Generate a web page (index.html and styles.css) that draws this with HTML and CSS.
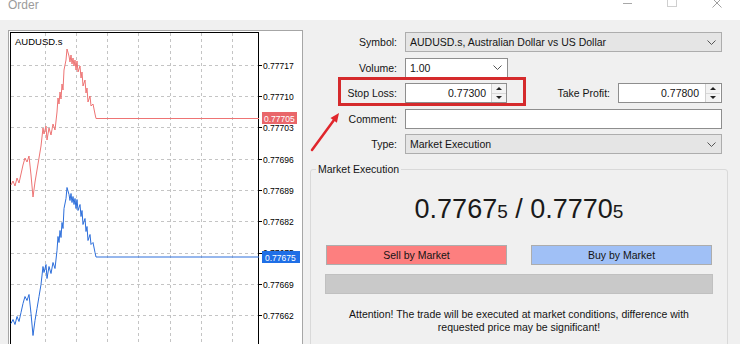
FILE: index.html
```html
<!DOCTYPE html>
<html lang="en">
<head>
<meta charset="utf-8">
<title>Order</title>
<link rel="stylesheet" href="styles.css">
</head>
<body>
<div class="window">
  <header class="titlebar">
    <span class="title">Order</span>
    <div class="controls">
      <svg class="ctl" width="45" height="10" viewBox="0 0 45 10"><path d="M18 3.5H27" stroke="#a8a8a8" fill="none"/></svg>
      <svg class="ctl" width="45" height="10" viewBox="0 0 45 10"><rect x="17.5" y="-2.5" width="9" height="9" stroke="#cfcfcf" fill="none"/></svg>
      <svg class="ctl" width="45" height="10" viewBox="0 0 45 10"><path d="M17.5 -1.5L26.5 7.5M26.5 -1.5L17.5 7.5" stroke="#a0a0a0" fill="none"/></svg>
    </div>
  </header>

  <main class="content">
    <div class="chart">
      <svg width="293" height="313" viewBox="9 31 293 313" class="chart-svg">
        <defs>
          <path id="price" fill="none" d="M11,185 L13,181 L15,186 L17,178 L19,183 L21,174 L23,165 L25,158 L27,162 L29,156 L31,175 L33,197 L35,182 L37,170 L39,158 L41,146 L43,128 L44,134 L46,126 L47,140 L49,128 L51,135 L53,124 L55,130 L57,112 L58,98 L59,104 L60,92 L61,99 L62,84 L63,90 L64,70 L66,60 L67,49 L69,56 L70,62 L71,55 L72,64 L73,58 L74,66 L75,60 L76,70 L77,61 L78,72 L80,66 L81,78 L82,72 L83,86 L85,80 L86,93 L87,88 L88,102 L90,96 L91,106 L93,104 L95,114 L96,118.5 L259,118.5"/>
        </defs>
        <path class="grid" d="M45.5 33V344M76.5 33V344M107.5 33V344M138.5 33V344M170.5 33V344M201.5 33V344M232.5 33V344M11 65.5H258M11 96.5H258M11 127.5H258M11 159.5H258M11 190.5H258M11 221.5H258M11 253.5H258M11 284.5H258M11 315.5H258"/>
        <rect x="10.5" y="32.5" width="248" height="330" fill="none" stroke="#000"/>
        <path class="ticks" d="M259 65.5H262M259 96.5H262M259 127.5H262M259 159.5H262M259 190.5H262M259 221.5H262M259 253.5H262M259 284.5H262M259 315.5H262M259 346.5H262"/>
        <text class="sym" x="15" y="45">AUDUSD.s</text>
        <g class="scale">
          <text x="263" y="68.5">0.77717</text>
          <text x="263" y="99.5">0.77710</text>
          <text x="263" y="130.5">0.77703</text>
          <text x="263" y="162.5">0.77696</text>
          <text x="263" y="193.5">0.77689</text>
          <text x="263" y="224.5">0.77682</text>
          <text x="263" y="255.5">0.77675</text>
          <text x="263" y="287.5">0.77669</text>
          <text x="263" y="318.5">0.77662</text>
          <text x="263" y="349.5">0.77655</text>
        </g>
        <use href="#price" stroke="#ee7474" stroke-width="1"/>
        <use href="#price" y="138.5" stroke="#2c6edb" stroke-width="1"/>
        <rect x="262" y="112" width="35" height="12" fill="#e9666a"/>
        <text class="tag" x="264" y="121.5">0.77705</text>
        <rect x="262" y="251" width="38" height="12" fill="#1f6fe6"/>
        <text class="tag" x="265" y="260.5">0.77675</text>
      </svg>
    </div>

    <section class="form">
      <div class="row">
        <span class="lbl">Symbol:</span>
        <div class="field grey wide">
          <span>AUDUSD.s, Australian Dollar vs US Dollar</span>
          <svg class="chev" width="9" height="5" viewBox="0 0 9 5"><polyline points="0.5,0.5 4.5,4.5 8.5,0.5" fill="none" stroke="#555"/></svg>
        </div>
      </div>

      <div class="row">
        <span class="lbl">Volume:</span>
        <div class="field white vol">
          <span>1.00</span>
          <svg class="chev" width="9" height="5" viewBox="0 0 9 5"><polyline points="0.5,0.5 4.5,4.5 8.5,0.5" fill="none" stroke="#555"/></svg>
        </div>
      </div>

      <div class="row annotated">
        <span class="lbl">Stop Loss:</span>
        <div class="field white spin sl">
          <span class="val">0.77300</span>
          <div class="spinner"><span class="up"></span><span class="down"></span></div>
        </div>
        <span class="lbl tp-lbl">Take Profit:</span>
        <div class="field white spin tp">
          <span class="val">0.77800</span>
          <div class="spinner"><span class="up"></span><span class="down"></span></div>
        </div>
        <div class="highlight"></div>
        <svg class="arrow" width="40" height="72" viewBox="0 0 40 72">
          <line x1="2" y1="67" x2="24" y2="37" stroke="#e0262c" stroke-width="2.5" stroke-linecap="round"/>
          <polygon points="29,30 26.9,39.7 20.5,34.9" fill="#e0262c"/>
        </svg>
      </div>

      <div class="row">
        <span class="lbl">Comment:</span>
        <div class="field white wide"></div>
      </div>

      <div class="row">
        <span class="lbl">Type:</span>
        <div class="field grey wide">
          <span>Market Execution</span>
          <svg class="chev" width="9" height="5" viewBox="0 0 9 5"><polyline points="0.5,0.5 4.5,4.5 8.5,0.5" fill="none" stroke="#555"/></svg>
        </div>
      </div>

      <fieldset class="group">
        <legend>Market Execution</legend>
        <div class="price">0.7767<small>5</small> / 0.7770<small>5</small></div>
        <div class="buttons">
          <button class="btn sell">Sell by Market</button>
          <button class="btn buy">Buy by Market</button>
        </div>
        <div class="bar"></div>
        <p class="note">Attention! The trade will be executed at market conditions, difference with<br>requested price may be significant!</p>
      </fieldset>
    </section>
  </main>
</div>
</body>
</html>
```

FILE: styles.css
```css
* { box-sizing: border-box; }
html, body { margin: 0; padding: 0; }
body {
  width: 740px;
  height: 344px;
  overflow: hidden;
  background: #f0f0f0;
  font-family: "Liberation Sans", Arial, sans-serif;
  font-size: 10.5px;
  color: #141414;
}
.window { width: 740px; height: 344px; overflow: hidden; }

.titlebar {
  height: 20px;
  background: #fff;
  display: flex;
  justify-content: space-between;
  align-items: flex-start;
}
.title {
  font-size: 12px;
  line-height: 12px;
  color: #9b9b9b;
  margin-left: 8px;
  margin-top: -1px;
}
.controls { display: flex; }
.ctl { display: block; }

.content {
  display: flex;
  align-items: flex-start;
  padding: 10px 0 0 8px;
  height: 324px;
}

.chart {
  flex: none;
  width: 295px;
  height: 314px;
  background: #fff;
  border: 1px solid #a6a6a6;
  border-bottom: none;
}
.chart-svg { display: block; font-family: "Liberation Sans", Arial, sans-serif; }
.chart-svg .grid { stroke: #c4c4c4; stroke-dasharray: 3 3; fill: none; }
.chart-svg .ticks { stroke: #000; fill: none; }
.chart-svg .sym { font-size: 9.5px; fill: #000; }
.chart-svg .scale text { font-size: 8.5px; fill: #000; }
.chart-svg .tag { font-size: 8.5px; fill: #fff; }

.form {
  flex: none;
  width: 418px;
  margin-left: 7px;
  padding-top: 2px;
  display: flex;
  flex-direction: column;
  gap: 5.5px;
}

.row {
  display: flex;
  align-items: center;
  height: 20px;
  padding-right: 6px;
}
.annotated { position: relative; }

.lbl {
  flex: none;
  width: 87px;
  margin-right: 8px;
  text-align: right;
  white-space: nowrap;
}
.tp-lbl { flex: 1; width: auto; }

.field {
  height: 20px;
  border: 1px solid #a8a8a8;
  display: flex;
  align-items: center;
  padding-left: 4px;
  white-space: nowrap;
}
.grey { background: #e5e5e5; border-color: #adadad; }
.white { background: #fff; border-color: #8e8e8e; }
.wide { flex: 1; }
.vol { width: 103px; flex: none; }
.chev { display: block; margin-left: auto; margin-right: 5px; }

.spin { flex: none; padding-left: 0; }
.sl { width: 102px; }
.tp { width: 104px; }
.spin .val { flex: 1; text-align: right; padding-right: 5px; }
.tp .val { padding-right: 6px; }
.spinner {
  width: 15px;
  height: 18px;
  display: flex;
  flex-direction: column;
  border-left: 1px solid #d0d0d0;
  background: #f3f3f3;
}
.tp .spinner { margin-right: 1px; }
.spinner span {
  flex: 1;
  display: flex;
  align-items: center;
  justify-content: center;
}
.spinner .up { border-bottom: 1px solid #d8d8d8; }
.spinner .up::before {
  content: "";
  border-left: 3px solid transparent;
  border-right: 3px solid transparent;
  border-bottom: 3px solid #222;
}
.spinner .down::before {
  content: "";
  border-left: 3px solid transparent;
  border-right: 3px solid transparent;
  border-top: 3px solid #222;
}

.highlight {
  position: absolute;
  left: 28px;
  top: -6px;
  width: 188px;
  height: 29px;
  border: 3px solid #d52a2c;
}
.arrow {
  position: absolute;
  left: 0;
  top: 0;
  overflow: visible;
}

.group {
  margin: 3px 0 0 0;
  padding: 0 15px 20px;
  border: 1px solid #d9d9d9;
  border-radius: 3px;
  min-width: 0;
}
.group legend {
  padding: 0 2px;
  margin-left: -10px;
  line-height: 13px;
}
.price {
  margin-top: 18px;
  text-align: center;
  font-size: 27px;
  line-height: 30px;
  color: #1a1a1a;
}
.price small { font-size: 19px; }

.buttons {
  display: flex;
  justify-content: space-between;
  margin-top: 18px;
}
.btn {
  width: 181px;
  height: 20px;
  padding: 0;
  border: 1px solid #adadad;
  font: inherit;
  color: #141414;
  display: flex;
  align-items: center;
  justify-content: center;
}
.sell { background: #fd7f7f; }
.buy { background: #a0c0f6; }

.bar {
  margin: 9px -1px 0;
  height: 20px;
  background: #c9c9c9;
  border: 1px solid #c0c0c0;
}
.note {
  margin: 14px 0 0;
  text-align: center;
  line-height: 13px;
}
```
